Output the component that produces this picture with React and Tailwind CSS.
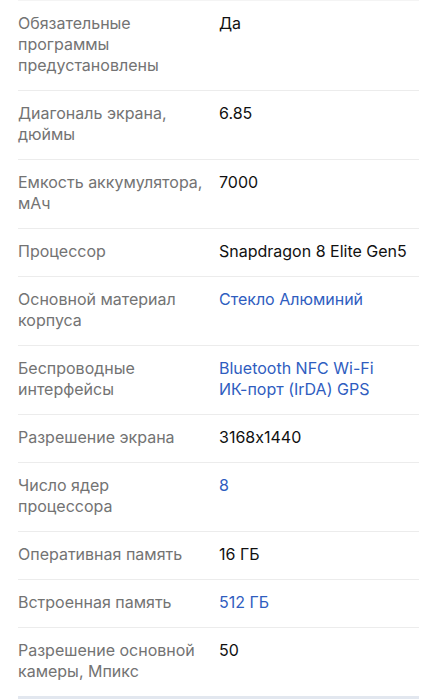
const specs = [
  { label: 'Обязательные программы предустановлены', value: 'Да' },
  { label: 'Диагональ экрана, дюймы', value: '6.85' },
  { label: 'Емкость аккумулятора, мАч', value: '7000' },
  { label: 'Процессор', value: 'Snapdragon 8 Elite Gen5' },
  { label: 'Основной материал корпуса', value: 'Стекло Алюминий', link: true },
  {
    label: 'Беспроводные интерфейсы',
    value: (
      <>
        Bluetooth NFC Wi-Fi <span className="whitespace-nowrap">ИК-порт</span> (IrDA) GPS
      </>
    ),
    link: true,
  },
  { label: 'Разрешение экрана', value: '3168x1440' },
  { label: 'Число ядер процессора', value: '8', link: true },
  { label: 'Оперативная память', value: '16 ГБ' },
  { label: 'Встроенная память', value: '512 ГБ', link: true },
  { label: 'Разрешение основной камеры, Мпикс', value: '50' },
];

export default function App() {
  return (
    <div className="min-h-[700px] bg-white px-[18px] font-['Inter',sans-serif] text-[16px] leading-[21px] [font-feature-settings:'calt'_0]">
      <div className="border-b-[3px] border-[#e2e7ef]">
        {specs.map((s) => (
          <div
            key={s.label}
            className="grid grid-cols-[190px_1fr] gap-x-[11px] border-t border-[#ececec] pt-[12px] pb-[14px] first:border-[#f4f4f4]"
          >
            <div className="text-[#737373]">{s.label}</div>
            <div className={s.link ? 'text-[#2f5dbf]' : 'text-[#111]'}>{s.value}</div>
          </div>
        ))}
      </div>
    </div>
  );
}
